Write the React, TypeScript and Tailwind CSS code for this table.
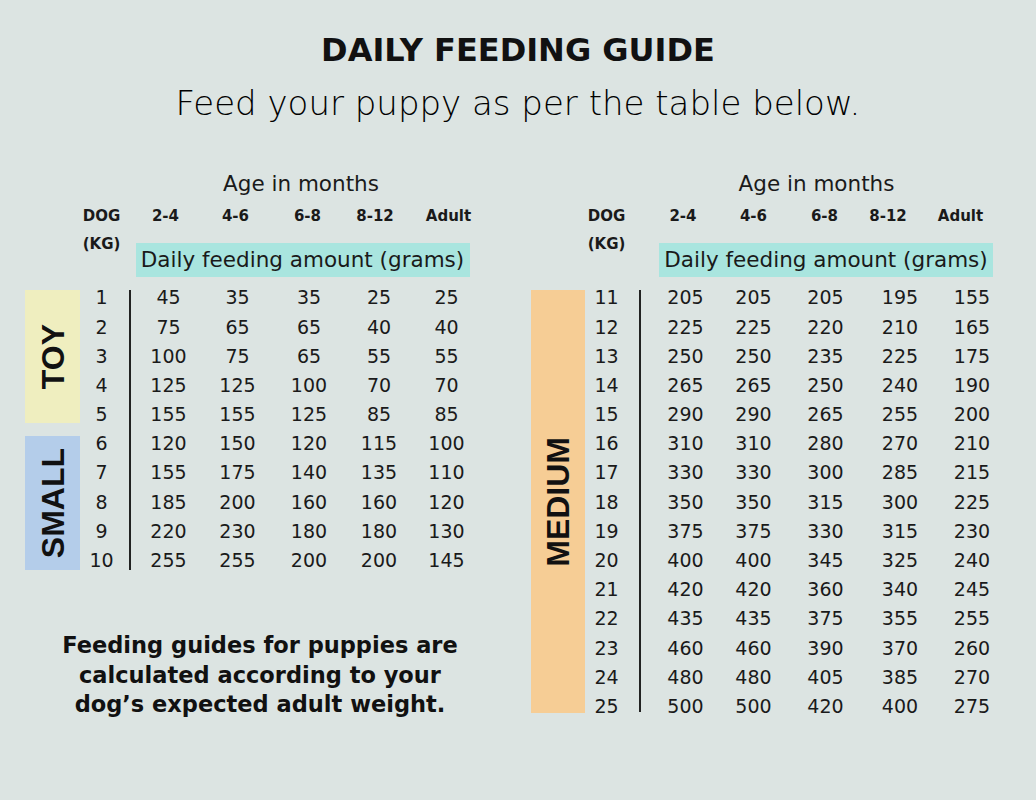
const LEFT_ROWS: [number, number[]][] = [
  [1, [45, 35, 35, 25, 25]],
  [2, [75, 65, 65, 40, 40]],
  [3, [100, 75, 65, 55, 55]],
  [4, [125, 125, 100, 70, 70]],
  [5, [155, 155, 125, 85, 85]],
  [6, [120, 150, 120, 115, 100]],
  [7, [155, 175, 140, 135, 110]],
  [8, [185, 200, 160, 160, 120]],
  [9, [220, 230, 180, 180, 130]],
  [10, [255, 255, 200, 200, 145]],
]

const RIGHT_ROWS: [number, number[]][] = [
  [11, [205, 205, 205, 195, 155]],
  [12, [225, 225, 220, 210, 165]],
  [13, [250, 250, 235, 225, 175]],
  [14, [265, 265, 250, 240, 190]],
  [15, [290, 290, 265, 255, 200]],
  [16, [310, 310, 280, 270, 210]],
  [17, [330, 330, 300, 285, 215]],
  [18, [350, 350, 315, 300, 225]],
  [19, [375, 375, 330, 315, 230]],
  [20, [400, 400, 345, 325, 240]],
  [21, [420, 420, 360, 340, 245]],
  [22, [435, 435, 375, 355, 255]],
  [23, [460, 460, 390, 370, 260]],
  [24, [480, 480, 405, 385, 270]],
  [25, [500, 500, 420, 400, 275]],
]

const AGES = ['2-4', '4-6', '6-8', '8-12', 'Adult']

// column widths are literal so tailwind picks them up
const LEFT_COLS = ['w-[67px]', 'w-[71px]', 'w-[72px]', 'w-[68px]', 'w-[67px]']
const LEFT_HEAD = ['w-[67px] pr-[6px]', 'w-[71px] pr-[4px]', 'w-[72px] pr-[3px]', 'w-[68px] pr-[8px]', 'w-[67px] pl-[4px]']
const RIGHT_COLS = ['w-[67px]', 'w-[69px]', 'w-[75px]', 'w-[74px]', 'w-[70px]']
const RIGHT_HEAD = ['w-[67px] pr-[5px]', 'w-[69px]', 'w-[75px] pr-[2px]', 'w-[74px] pr-[24px]', 'w-[70px] pr-[23px]']

function SideBox({ label, className }: { label: string; className: string }) {
  return (
    <div className={`flex items-center justify-center ${className}`}>
      <span className="rotate-180 font-['Liberation_Sans',Arial,sans-serif] text-[32px] font-bold leading-none text-[#111] [writing-mode:vertical-rl]">
        {label}
      </span>
    </div>
  )
}

function Table({
  rows,
  cols,
  heads,
  side,
  lead,
  kgPad,
  linePad,
  agePad,
  tealPad,
  lineBox,
}: {
  rows: [number, number[]][]
  cols: string[]
  heads: string[]
  side: React.ReactNode
  lead: string
  kgPad: string
  linePad: string
  agePad: string
  tealPad: string
  lineBox: string
}) {
  return (
    <div className="flex flex-col">
      {/* Age in months */}
      <div className="flex h-[32px]">
        <div className={lead} />
        <div className={`flex flex-1 items-center justify-center text-[21.5px] ${agePad}`}>Age in months</div>
      </div>

      {/* age headers */}
      <div className="flex h-[32px] items-center text-[15px] font-bold">
        <div className={kgPad} />
        <div className="w-[39px] text-center">DOG</div>
        <div className={linePad} />
        {AGES.map((a, i) => (
          <div key={a} className={`text-center ${heads[i]}`}>{a}</div>
        ))}
      </div>

      {/* (KG) + daily amount band */}
      <div className="flex h-[51px]">
        <div className={kgPad} />
        <div className="h-[24px] w-[39px] text-center text-[15px] font-bold leading-[24px]">(KG)</div>
        <div className={linePad} />
        <div className={`pt-[11px] ${tealPad}`}>
          <div className="flex h-[34px] w-[334px] items-center justify-center bg-[#a9e5df] text-[21.5px]">
            Daily feeding amount (grams)
          </div>
        </div>
      </div>

      {/* body */}
      <div className="flex">
        {side}
        <div className="w-[2px]" />
        <div className="flex w-[39px] flex-col">
          {rows.map(([kg]) => (
            <div key={kg} className="flex h-[29.2px] items-center justify-center text-[19px]">{kg}</div>
          ))}
        </div>
        <div className={lineBox}>
          <div className="h-full w-[1.5px] bg-[#222]" />
        </div>
        <div className="flex flex-col">
          {rows.map(([kg, vals]) => (
            <div key={kg} className="flex h-[29.2px] items-center text-[19px]">
              {vals.map((v, i) => (
                <div key={i} className={`text-center ${cols[i]}`}>{v}</div>
              ))}
            </div>
          ))}
        </div>
      </div>
    </div>
  )
}

export default function App() {
  return (
    <div className="h-[800px] w-[1036px] bg-[#dce4e2] font-['DejaVu_Sans',sans-serif] text-[#1a1a1a]">
      {/* Header */}
      <div className="pt-[30px] text-center">
        <h1 className="text-[32px] font-bold leading-[40px] text-[#111]">DAILY FEEDING GUIDE</h1>
        <p className="mt-[11px] text-[34px] font-extralight leading-[44px] text-black">Feed your puppy as per the table below.</p>
      </div>

      <div className="mt-[43px] flex">
        {/* Left: toy + small */}
        <div className="ml-[25px] flex w-[455px] flex-col">
          <Table
            rows={LEFT_ROWS}
            cols={LEFT_COLS}
            heads={LEFT_HEAD}
            lead="w-[110px]"
            kgPad="w-[57px]"
            linePad="w-[14px]"
            agePad="pr-[13px]"
            tealPad="pl-[0.5px]"
            lineBox="flex w-[14px] pb-[5px] pl-[8px] pt-[7px]"
            side={
              <div className="flex w-[55px] flex-col">
                <SideBox label="TOY" className="mb-[6px] mt-[7px] h-[133px] bg-[#efeebf]" />
                <SideBox label="SMALL" className="mb-[5px] mt-[7px] h-[134px] bg-[#b4cdea]" />
              </div>
            }
          />
          <p className="mt-[56px] pl-[15px] text-center text-[22.5px] font-bold leading-[29.5px] text-[#111]">
            Feeding guides for puppies are
            <br />
            calculated according to your
            <br />
            dog’s expected adult weight.
          </p>
        </div>

        {/* Right: medium */}
        <div className="ml-[51px] flex w-[476px] flex-col">
          <Table
            rows={RIGHT_ROWS}
            cols={RIGHT_COLS}
            heads={RIGHT_HEAD}
            lead="w-[121px]"
            kgPad="w-[56px]"
            linePad="w-[26px]"
            agePad="pr-[26px]"
            tealPad="pl-[7px]"
            lineBox="flex w-[26px] pb-[9px] pl-[13px] pt-[7px]"
            side={
              <div className="flex w-[54px] flex-col">
                <SideBox label="MEDIUM" className="mb-[8px] mt-[7px] h-[423px] bg-[#f6cd95]" />
              </div>
            }
          />
        </div>
      </div>
    </div>
  )
}
